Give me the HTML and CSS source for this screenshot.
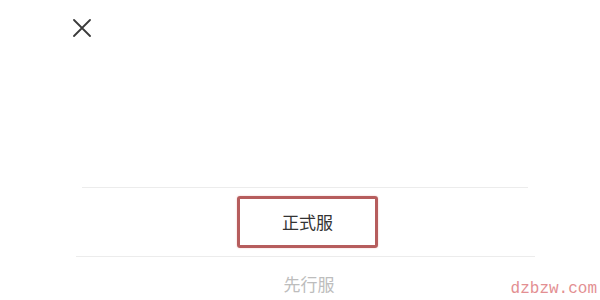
FILE: index.html
```html
<!DOCTYPE html>
<html lang="zh">
<head>
<meta charset="utf-8">
<link rel="stylesheet" href="styles.css">
</head>
<body>
<div class="page">
  <header class="topbar">
    <svg class="close" width="18" height="18" viewBox="0 0 18 18"><path d="M1 1 L17 17 M17 1 L1 17" stroke="#3a3a3a" stroke-width="1.8" stroke-linecap="round" fill="none"/></svg>
  </header>
  <main class="list">
    <div class="divider d1"></div>
    <div class="row">
      <div class="option selected">正式服</div>
    </div>
    <div class="divider d2"></div>
    <div class="row">
      <div class="option muted">先行服</div>
    </div>
  </main>
  <div class="watermark">dzbzw.com</div>
</div>
</body>
</html>
```
FILE: styles.css
```css
html, body {
  margin: 0;
  padding: 0;
  background: #fff;
}
.page {
  position: relative;
  width: 600px;
  height: 300px;
  overflow: hidden;
  font-family: "Noto Sans CJK SC", "Noto Sans", sans-serif;
}
.topbar {
  height: 187px;
  padding: 19px 0 0 73px;
  box-sizing: border-box;
}
.close {
  display: block;
}
.divider {
  height: 1px;
  background: #ececec;
}
.d1 {
  margin: 0 72px 0 82px;
}
.d2 {
  margin: 0 65px 0 76px;
}
.row {
  display: flex;
  padding-left: 237px;
}
.option {
  width: 141px;
  box-sizing: border-box;
  display: flex;
  align-items: center;
  justify-content: center;
  font-size: 17px;
}
.selected {
  margin: 8px 0 8px;
  height: 52px;
  border: 3px solid #b65d5d;
  border-radius: 3px;
  color: #333;
  box-shadow: 0 0 2px #f0c0c0;
  padding-bottom: 2px;
}
.muted {
  height: 52px;
  padding-left: 3px;
  color: #bdbdbd;
}
.watermark {
  position: absolute;
  right: 3px;
  bottom: 2px;
  font-family: "Liberation Mono", monospace;
  font-size: 16px;
  color: #e38f92;
}
```
